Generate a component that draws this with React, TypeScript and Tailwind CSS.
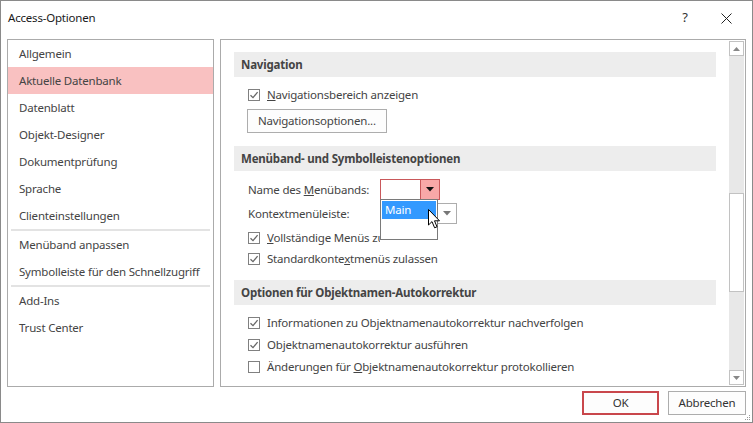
import React from 'react';

const font = { fontFamily: '"Noto Sans", "Open Sans", sans-serif' };

const navItems: (string | null)[] = [
  'Allgemein',
  'Aktuelle Datenbank',
  'Datenblatt',
  'Objekt-Designer',
  'Dokumentprüfung',
  'Sprache',
  'Clienteinstellungen',
  null,
  'Menüband anpassen',
  'Symbolleiste für den Schnellzugriff',
  null,
  'Add-Ins',
  'Trust Center',
];

function CheckBox({ checked }: { checked: boolean }) {
  return (
    <span className="w-[12px] h-[12px] border border-[#808080] bg-white flex items-center justify-center shrink-0">
      {checked && (
        <svg width="10" height="10" viewBox="0 0 10 10">
          <path d="M1.5 5.2 L4 7.6 L8.6 2.2" fill="none" stroke="#666" strokeWidth="1.3" />
        </svg>
      )}
    </span>
  );
}

function SectionHeader({ children, className = '' }: { children: React.ReactNode; className?: string }) {
  return (
    <div className={`mx-[13px] h-[25px] bg-[#ededed] flex items-center pl-[7px] font-bold text-[#444] ${className}`}>
      {children}
    </div>
  );
}

function CheckRow({
  checked,
  children,
  className = '',
  labelClass = '',
}: {
  checked: boolean;
  children: React.ReactNode;
  className?: string;
  labelClass?: string;
}) {
  return (
    <div className={`flex items-center pl-[27px] whitespace-nowrap ${className}`}>
      <CheckBox checked={checked} />
      <span className={`ml-[7px] ${labelClass}`}>{children}</span>
    </div>
  );
}

function DownArrow({ color }: { color: string }) {
  return (
    <svg width="8" height="5" viewBox="0 0 8 5">
      <path d="M0 0 H8 L4 4.5 Z" fill={color} />
    </svg>
  );
}

export default function App() {
  return (
    <div style={font} className="w-[753px] h-[423px] border border-[#8a8a8a] bg-white flex flex-col text-[11.5px] tracking-[-0.2px] text-[#444] overflow-hidden">
      {/* Title bar */}
      <div className="h-[38px] flex items-center shrink-0">
        <span className="pl-[7px] pb-[4px] text-[#1a1a1a]">Access-Optionen</span>
        <span className="ml-auto pb-[4px] w-[12px] text-center text-[#333] text-[13px]">?</span>
        <span className="ml-[30px] mr-[20px] pb-[4px]">
          <svg width="11" height="11" viewBox="0 0 11 11">
            <path d="M0.5 0.5 L10.5 10.5 M10.5 0.5 L0.5 10.5" stroke="#222" strokeWidth="1" />
          </svg>
        </span>
      </div>

      {/* Panels */}
      <div className="flex px-[6px] gap-[6px] h-[348px] shrink-0">
        {/* Left navigation */}
        <div className="w-[207px] border border-[#ababab] flex flex-col">
          {navItems.map((item, i) =>
            item === null ? (
              <div key={i} className="mx-[3px] h-[2px] bg-[#e3e3e3]" />
            ) : (
              <div
                key={i}
                className={`h-[27px] flex items-center pl-[11px] whitespace-nowrap ${
                  item === 'Aktuelle Datenbank' ? 'bg-[#f9c1c1]' : ''
                }`}
              >
                {item}
              </div>
            )
          )}
        </div>

        {/* Right options */}
        <div className="flex-1 border border-[#ababab] flex">
          <div className="flex-1 relative overflow-hidden">
            <SectionHeader className="mt-[12px]">Navigation</SectionHeader>
            <CheckRow checked className="mt-[7px] h-[21px]">
              <u>N</u>avigationsbereich anzeigen
            </CheckRow>
            <div className="ml-[26px] mt-[4px] w-[140px] h-[24px] border border-[#adadad] bg-[#fdfdfd] flex items-center pl-[10px]">
              Navigationsoptionen...
            </div>

            <SectionHeader className="mt-[13px]">Menüband- und Symbolleistenoptionen</SectionHeader>
            <div className="flex items-center pl-[27px] mt-[8px] h-[21px]">
              <span className="w-[132px]">
                Name des <u>M</u>enübands:
              </span>
              <div className="w-[60px] h-[21px] border border-[#c9585b] bg-white flex justify-end">
                <div className="w-[19px] h-full border-l border-[#c9585b] bg-[#f8a8a8] flex items-center justify-center">
                  <DownArrow color="#111" />
                </div>
              </div>
            </div>
            <div className="flex items-center pl-[27px] mt-[3px] h-[21px]">
              <span className="w-[132px]">Kontextmenüleiste:</span>
              <div className="w-[77px] h-[21px] border border-[#adadad] bg-white flex justify-end">
                <div className="w-[19px] h-full flex items-center justify-center">
                  <DownArrow color="#777" />
                </div>
              </div>
            </div>
            <CheckRow checked className="mt-[3px] h-[21px]" labelClass="w-[113px] overflow-hidden">
              <u>V</u>ollständige Menüs zulassen
            </CheckRow>
            <CheckRow checked className="h-[21px]">
              Standardkonte<u>x</u>tmenüs zulassen
            </CheckRow>

            <SectionHeader className="mt-[11px]">Optionen für Objektnamen-Autokorrektur</SectionHeader>
            <CheckRow checked className="mt-[7px] h-[22px]">
              Informationen zu Objektnamenautokorrektur nachverfolgen
            </CheckRow>
            <CheckRow checked className="h-[22px]">
              Ob<u>j</u>ektnamenautokorrektur ausführen
            </CheckRow>
            <CheckRow checked={false} className="h-[22px]">
              Änderungen für <u>O</u>bjektnamenautokorrektur protokollieren
            </CheckRow>

            {/* Open dropdown list */}
            <div className="absolute left-[159px] top-[159px] w-[58px] h-[41px] border border-[#7a7a7a] bg-white p-[1px] z-10">
              <div className="h-[18px] bg-[#3399ff] text-white flex items-center pl-[3px]">Main</div>
            </div>
            {/* Mouse cursor */}
            <svg className="absolute left-[207px] top-[169px] z-20" width="13" height="20" viewBox="0 0 13 20">
              <path
                d="M0.5 0.5 L0.5 16 L4 12.6 L6.6 18.8 L9 17.8 L6.5 11.8 L11.5 11.8 Z"
                fill="#fff"
                stroke="#000"
                strokeWidth="1"
                strokeLinejoin="round"
              />
            </svg>
          </div>

          {/* Scrollbar */}
          <div className="w-[15px] mr-[1px] mt-[1px] mb-[1px] bg-[#e8e8e8] flex flex-col">
            <div className="h-[15px] border border-[#c2c2c2] bg-white flex items-center justify-center">
              <svg width="7" height="4" viewBox="0 0 7 4">
                <path d="M0 4 H7 L3.5 0 Z" fill="#888" />
              </svg>
            </div>
            <div className="flex-1 relative">
              <div className="absolute left-0 right-0 top-[137px] h-[99px] border border-[#c2c2c2] bg-white" />
            </div>
            <div className="h-[15px] border border-[#c2c2c2] bg-white flex items-center justify-center">
              <svg width="7" height="4" viewBox="0 0 7 4">
                <path d="M0 0 H7 L3.5 4 Z" fill="#888" />
              </svg>
            </div>
          </div>
        </div>
      </div>

      {/* Buttons */}
      <div className="flex justify-end gap-[9px] pr-[6px] mt-[4px] relative flex-1">
        <div className="w-[77px] h-[24px] border-2 border-[#c9474c] bg-[#fdfdfd] flex items-center justify-center text-[#333]">
          OK
        </div>
        <div className="w-[78px] h-[24px] border border-[#adadad] bg-[#fdfdfd] flex items-center justify-center text-[#333]">
          Abbrechen
        </div>
        <svg className="absolute right-[1px] bottom-[1px]" width="7" height="7" viewBox="0 0 7 7">
          <rect x="5" y="1" width="1" height="1" fill="#999" />
          <rect x="3" y="3" width="1" height="1" fill="#999" />
          <rect x="5" y="3" width="1" height="1" fill="#999" />
          <rect x="1" y="5" width="1" height="1" fill="#999" />
          <rect x="3" y="5" width="1" height="1" fill="#999" />
          <rect x="5" y="5" width="1" height="1" fill="#999" />
        </svg>
      </div>
    </div>
  );
}
